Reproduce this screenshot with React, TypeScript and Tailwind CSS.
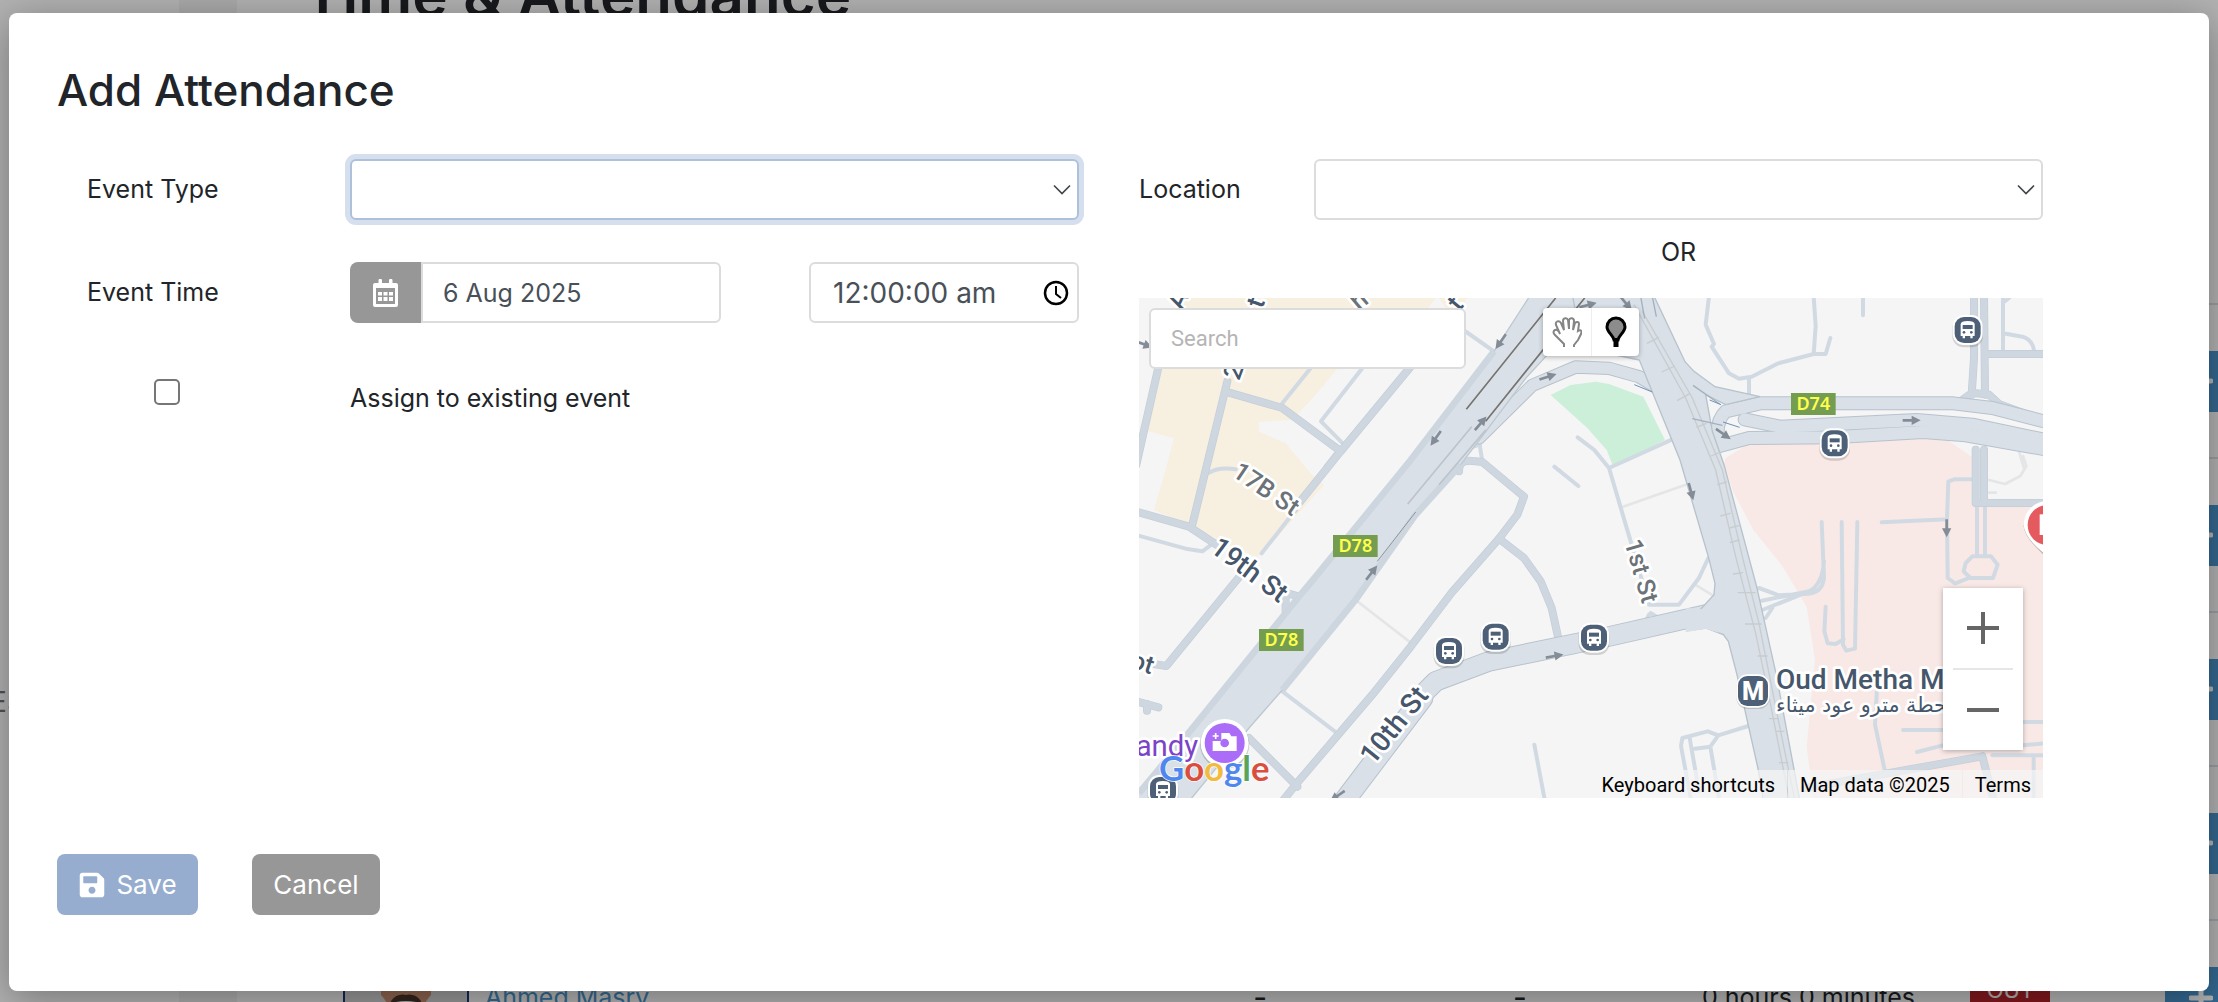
import React, { useState } from "react"
import { FaSave } from "react-icons/fa"

type Row = {
  name?: string
  start?: string
  end?: string
  total?: string
  status?: string
}

const rows: Row[] = [
  {},
  {},
  {},
  {},
  { name: "Ahmed Masry", start: "-", end: "-", total: "0 hours 0 minutes", status: "OUT" },
]

const field =
  "h-[61px] w-full rounded-md border-2 border-[#dcdcdc] bg-white text-[#495057] outline-none"

export default function App() {
  return (
    <div className="relative h-screen overflow-hidden bg-white font-['Inter',sans-serif] text-[#212529]">
      <AttendancePage />
      <div className="absolute inset-0 flex flex-col bg-black/30 px-[9px] pt-[13px] pb-[11px]">
        <AddAttendance />
      </div>
    </div>
  )
}

function AttendancePage() {
  return (
    <div className="flex h-full" aria-hidden="true">
      <aside className="flex w-[179px] shrink-0 items-end bg-white pb-[284px]">
        <span className="-ml-7 text-[28px] leading-[32px] text-[#777]">TES</span>
      </aside>
      <div className="w-[58px] shrink-0 bg-[#f4f4f4]" />
      <main className="min-w-0 grow pl-[90px]">
        <h1 className="-mt-[46px] -ml-6 h-[349px] text-[60px] leading-[80px] font-semibold">Time &amp; Attendance</h1>
        <table className="w-[calc(100%+33px)] table-fixed border-collapse text-[25px]">
          <colgroup>
            <col className="w-[8%]" />
            <col className="w-[34%]" />
            <col className="w-[13%]" />
            <col className="w-[14%]" />
            <col className="w-[16%]" />
            <col className="w-[5%]" />
            <col />
          </colgroup>
          <tbody>
            {rows.map((row, i) => (
              <tr key={i} className="h-[154px] border-t-2 border-[#dee2e6]">
                <td className="pl-4">{row.name && <Avatar />}</td>
                <td className="pl-1 text-[#4b96ce]">{row.name}</td>
                <td className="text-center text-[30px]">{row.start}</td>
                <td className="text-center text-[30px]">{row.end}</td>
                <td className="text-center whitespace-nowrap">{row.total}</td>
                <td>
                  {row.status && (
                    <span className="mx-auto block w-[80px] bg-[#bc252c] pb-4 text-center text-[22px] leading-[32px] text-white">
                      {row.status}
                    </span>
                  )}
                </td>
                <td className="pr-[15px]">
                  <button
                    type="button"
                    tabIndex={-1}
                    className="ml-auto flex h-[61px] w-[71px] items-center justify-center bg-[#4b96ce]"
                  >
                    <svg className="h-6 w-6" viewBox="0 0 24 24" stroke="#fff" strokeWidth="5" strokeLinecap="round">
                      <path d="M2 12h20M12 2v20" />
                    </svg>
                  </button>
                </td>
              </tr>
            ))}
          </tbody>
        </table>
      </main>
    </div>
  )
}

function Avatar() {
  return (
    <svg className="h-[126px] w-[126px]" viewBox="0 0 126 126">
      <rect x="1" y="1" width="124" height="124" fill="#d8d8d8" stroke="#1b3a78" strokeWidth="2" />
      <path d="M38 40Q38 14 63 14T88 40L88 60Q82 66 80 74Q74 88 63 88T46 74Q44 66 38 60Z" fill="#c98f70" />
      <path d="M38 40Q36 10 63 10T88 40Q78 26 63 26T38 40Z" fill="#2b201b" />
      <path d="M48 66Q54 58 63 60Q72 58 78 66Q76 90 63 90T48 66Z" fill="#4a342b" />
      <path d="M53 67Q63 65 73 67Q70 74 63 74T53 67Z" fill="#fff" />
    </svg>
  )
}

function AddAttendance() {
  const [eventType, setEventType] = useState("")
  const [location, setLocation] = useState("")
  const [assign, setAssign] = useState(false)

  return (
    <form
      role="dialog"
      aria-labelledby="dialog-title"
      className="flex grow flex-col rounded-lg bg-white px-12 pt-12 shadow-[0_8px_40px_rgba(0,0,0,0.35)]"
      onSubmit={(e) => e.preventDefault()}
    >
      <h2 id="dialog-title" className="text-[44px] leading-[58px] font-medium">
        Add Attendance
      </h2>

      <div className="mt-10 grid grid-cols-[293fr_729fr_60fr_904fr_118fr] text-[25px]">
        <div className="col-span-2">
          <div className="grid grid-cols-[293fr_729fr] items-center">
            <label htmlFor="event-type" className="pl-[30px]">
              Event Type
            </label>
            <Dropdown id="event-type" value={eventType} onChange={setEventType} focused />
          </div>

          <div className="mt-[42px] grid grid-cols-[293fr_371fr_88fr_270fr] items-center">
            <label htmlFor="event-date" className="pl-[30px]">
              Event Time
            </label>
            <div className="flex">
              <button
                type="button"
                aria-label="Open calendar"
                className="flex h-[61px] w-[71px] shrink-0 items-center justify-center rounded-l-lg bg-[#979797]"
              >
                <CalendarIcon />
              </button>
              <input
                id="event-date"
                type="text"
                defaultValue="6 Aug 2025"
                className={`${field} min-w-0 rounded-l-none pl-5 text-[25px]`}
              />
            </div>
            <div />
            <div className="relative">
              <input
                type="text"
                aria-label="Time"
                defaultValue="12:00:00 am"
                className={`${field} pr-12 pl-[22px] text-[28px]`}
              />
              <svg
                className="pointer-events-none absolute top-[18px] right-[10px] h-[26px] w-[26px]"
                viewBox="0 0 26 26"
                fill="none"
                stroke="#000"
              >
                <circle cx="13" cy="13" r="11" strokeWidth="2.500" />
                <path d="M13 6v8l5 4" strokeWidth="2" />
              </svg>
            </div>
          </div>

          <div className="mt-[52px] grid grid-cols-[293fr_729fr] items-start">
            <div className="flex justify-center pr-[74px]">
              <input
                id="assign"
                type="checkbox"
                checked={assign}
                onChange={(e) => setAssign(e.target.checked)}
                className="mt-1 h-[26px] w-[26px] appearance-none rounded-[5px] border-2 border-[#767676] bg-white checked:bg-[#96add0]"
              />
            </div>
            <label htmlFor="assign" className="pt-[5px]">
              Assign to existing event
            </label>
          </div>
        </div>

        <div className="col-start-4">
          <div className="grid grid-cols-[175fr_729fr] items-center">
            <label htmlFor="location">Location</label>
            <Dropdown id="location" value={location} onChange={setLocation} />
            <div />
            <p className="mt-3 text-center leading-[40px]">OR</p>
          </div>
          <MapPicker />
        </div>
      </div>

      <div className="mt-14 flex gap-[54px] pb-[76px] text-[26px] text-white">
        <button
          type="submit"
          className="flex h-[61px] w-[141px] items-center justify-center gap-[10px] rounded-lg bg-[#96add0]"
        >
          <FaSave className="h-7 w-7" />
          Save
        </button>
        <button type="button" className="h-[61px] w-[128px] rounded-lg bg-[#979797]">
          Cancel
        </button>
      </div>
    </form>
  )
}

function Dropdown({
  id,
  value,
  onChange,
  focused,
}: {
  id: string
  value: string
  onChange: (value: string) => void
  focused?: boolean
}) {
  return (
    <div className="relative">
      <select
        id={id}
        value={value}
        onChange={(e) => onChange(e.target.value)}
        className={
          focused
            ? "block h-[61px] w-full appearance-none rounded-md border-2 border-[#aec1dc] bg-white px-5 ring-5 ring-[#d6dfed] outline-none"
            : "block h-[61px] w-full appearance-none rounded-md border-2 border-[#dcdcdc] bg-white px-5 outline-none"
        }
      >
        <option value=""></option>
      </select>
      <svg
        className="pointer-events-none absolute top-[25px] right-2 h-3 w-[18px]"
        viewBox="0 0 18 12"
        fill="none"
        stroke="#3f444a"
        strokeWidth="1.600"
      >
        <path d="M1 1.500l8 8 8-8" />
      </svg>
    </div>
  )
}

function CalendarIcon() {
  return (
    <svg className="h-7 w-[25px]" viewBox="0 0 25 28" fill="#fff">
      <path
        fillRule="evenodd"
        d="M2 4h3.500V1.500a1.500 1.500 0 0 1 3.500 0V4h7V1.500a1.500 1.500 0 0 1 3.500 0V4H23a2 2 0 0 1 2 2v20a2 2 0 0 1-2 2H2a2 2 0 0 1-2-2V6a2 2 0 0 1 2-2ZM3 9v16h19V9Z"
      />
      <path d="M5 13h4v3.500H5zM10.500 13h4v3.500h-4zM16 13h4v3.500h-4zM5 18h4v4H5zM10.500 18h4v4h-4zM16 18h4v4h-4z" />
    </svg>
  )
}

function MapPicker() {
  return (
    <div className="relative mt-[26px] h-[500px] overflow-hidden font-['Roboto',sans-serif]">
      <StreetMap />

      <input
        type="text"
        aria-label="Search"
        placeholder="Search"
        className="absolute top-[10px] left-[10px] h-[61px] w-[317px] rounded-md border-2 border-[#dcdcdc] bg-white pl-5 text-[22px] outline-none placeholder:text-[#b5b5b5]"
      />

      <div className="absolute top-[10px] left-1/2 flex -translate-x-1/2 overflow-hidden rounded-sm bg-white shadow-[0_1px_5px_rgba(0,0,0,0.3)]">
        <button type="button" aria-label="Stop drawing" className="flex h-12 w-12 items-center justify-center">
          <svg className="h-[30px] w-[30px]" viewBox="0 0 30 30" fill="none" stroke="#858585" strokeWidth="2">
            <path d="M12 30v-3L3 18c-2-2-2-4 0-5s4 1 5 4L4 8c-1-4 3-5 5-2l3 7-1-9c0-3 4-4 5-1l1 9V3c1-3 5-2 5 1l-1 9 2-7c2-2 4-1 4 1l-1 7c3-2 4 0 3 3l-3 6-4 5v3" />
          </svg>
        </button>
        <button
          type="button"
          aria-label="Add a marker"
          className="flex h-12 w-12 items-center justify-center border-l border-[#eee]"
        >
          <svg className="h-8 w-6" viewBox="0 0 24 32" fill="#8c8c8c" stroke="#000" strokeWidth="3">
            <path d="M12 2a9 9 0 0 1 9 9c0 5-6 8-7 13h-4C9 19 3 16 3 11a9 9 0 0 1 9-9Z" />
            <path d="M12 22v9" strokeWidth="5" />
          </svg>
        </button>
      </div>

      <div className="absolute right-5 bottom-12 flex w-20 flex-col items-center bg-white shadow-[0_1px_5px_rgba(0,0,0,0.3)]">
        <button type="button" aria-label="Zoom in" className="flex h-20 w-20 items-center justify-center">
          <svg className="h-8 w-8" viewBox="0 0 32 32" fill="#666">
            <path d="M14 0h4v14h14v4H18v14h-4V18H0v-4h14z" />
          </svg>
        </button>
        <div className="h-[2px] w-[60px] bg-[#e6e6e6]" />
        <button type="button" aria-label="Zoom out" className="flex h-20 w-20 items-center justify-center">
          <svg className="h-8 w-8" viewBox="0 0 32 32" fill="#666">
            <path d="M0 14h32v4H0z" />
          </svg>
        </button>
      </div>

      <div className="absolute right-0 bottom-0 flex h-7 gap-px text-[20px] leading-[30px] text-black">
        <button type="button" className="bg-[#f5f5f5]/70 px-3">
          Keyboard shortcuts
        </button>
        <span className="bg-[#f5f5f5]/70 px-3">Map data ©2025</span>
        <a href="#terms" className="bg-[#f5f5f5]/70 px-3">
          Terms
        </a>
      </div>
    </div>
  )
}

const mediumRoads = [
  // west blocks
  "M60 200L-8 500M265 250L160 680M270 284L430 330L605 460L820 200M605 460L460 640",
  "M-10 640L150 686L232 740M306 830L82 1104L30 1096",
  "M0 1212l58 16M24 1218v20M412 876l76 22M440 900v60",
  // blocks east of the highway
  "M960 520Q960 480 1010 490L1030 492L1155 596L1135 650L1080 722L938 884L815 1046L700 1190L470 1460L430 1510",
  "M1080 722L1155 780L1205 850L1238 930L1260 1030",
  "M330 1320L475 1466",
  // north east
  "M2505 -10L2505 180L2498 290M2535 -10L2538 290M2545 168H2720M2450 320L2500 284L2550 290L2580 318L2720 370",
  "M2510 455v155M2535 455v155M2510 615H2720",
  "M2000 1470L2530 1375M2530 1375L2565 1510",
]

const smallRoads = [
  "M520 204L430 316M675 204L546 370L615 440M595 460L560 505M590 482L368 766M210 524Q240 506 290 514",
  "M-5 712L140 752L190 760L230 730",
  "M965 90l100 70",
  "M430 1180L595 1306M1246 506l72 58M1186 1340l32 170",
  "M1316 418l50 38L1410 510L1475 730L1530 920L1620 920L1680 840L1708 780M1410 510L1600 424M1530 950l-15 30M1535 945l40 26",
  "M960 460L1022 440L1030 490",
  "M1710 -5L1700 80L1725 138L1718 146L1770 226L1800 242L1838 236L1918 196L2024 168H2060L2074 120M2024 168L2030 84L2024 -5M1830 240V300M2172 -5V52",
  "M2592 160V-5M2592 14L2610 0M2592 106L2650 116Q2680 124 2686 160",
  "M2048 672L2055 840Q2050 890 1990 888L1920 892L1860 870M2055 790Q2050 860 2010 880L1870 936M1868 908L2010 880M1880 960L1900 930",
  "M2108 672L2112 1040L2122 1058L2148 1052L2155 672M2060 926L2056 1000L2066 1036L2090 1038L2114 1024",
  "M2228 673L2424 664L2428 550L2446 544H2500M2424 664L2426 840L2448 856L2490 840",
  "M2514 615v160M2538 615v160M2500 775H2556L2576 800L2562 840H2494L2474 820L2480 795Z",
  "M2214 1170L2208 1280L2240 1430M2292 1296H2420M2334 1362L2420 1340M2650 1272H2720M2650 1342L2720 1336M2560 1372H2720M2684 1372V1500",
  "M1828 1284L1738 1312L1706 1300L1630 1320L1626 1344L1655 1500M1652 1320L1680 1480M1738 1312L1714 1346L1668 1352M1714 1346L1740 1500",
]

const buses = [
  [2486, 96],
  [2087, 436],
  [930, 1059],
  [1070, 1016],
  [1365, 1019],
  [72, 1476],
]

const arrows = [
  [1085, 131, 125],
  [1025, 376, -50],
  [890, 421, 125],
  [1227, 236, -18],
  [2318, 367, 0],
  [1753, 408, 35],
  [1656, 581, 75],
  [2423, 691, 90],
  [698, 824, -52],
  [1247, 1074, -10],
  [595, 1494, 145],
  [15, 139, 20],
  [1347, 21, -15],
  [1461, 16, 50],
]

const shields = [
  { x: 1956, y: 285, text: "D74" },
  { x: 582, y: 711, text: "D78" },
  { x: 360, y: 993, text: "D78" },
]

const streets = [
  { x: 276, y: 532, r: 34, size: 75, color: "#6b7278", text: "17B St" },
  { x: 210, y: 758, r: 37, size: 82, color: "#46566b", text: "19th St" },
  { x: 702, y: 1404, r: -51, size: 84, color: "#46566b", text: "10th St" },
  { x: 1456, y: 732, r: 74, size: 75, color: "#6b7278", text: "1st St" },
  { x: 300, y: 250, r: -70, size: 76, color: "#46566b", text: "2" },
  { x: 130, y: 40, r: -65, size: 80, color: "#46566b", text: "A" },
  { x: 370, y: 34, r: -70, size: 76, color: "#46566b", text: "t" },
  { x: 660, y: 40, r: -40, size: 76, color: "#6b7278", text: "h" },
  { x: 960, y: 42, r: -50, size: 76, color: "#46566b", text: "t" },
  { x: -30, y: 1108, r: 18, size: 76, color: "#46566b", text: "ot" },
]

// Map units are a third of a pixel, so the line work stays on whole numbers.
function StreetMap() {
  return (
    <svg
      className="block h-full w-full"
      viewBox="0 0 2712 1500"
      preserveAspectRatio="xMidYMid slice"
      role="img"
      aria-label="Map around Oud Metha"
    >
      <rect width="2712" height="1500" fill="#f5f5f5" />

      {/* areas */}
      <path
        d="M135 0H890L830 80L595 212L530 290L460 366L360 371V401L440 436L515 526L555 561L370 766L350 776L240 726L160 686L45 636L80 516L105 421L15 396L60 212Z"
        fill="#f7efdf"
      />
      <path d="M900 0H985L960 40L920 30Z" fill="#f7efdf" />
      <path
        d="M1755 500L1760 480L1823 441L2418 421L2498 476V616H2712V1500H2023L2003 1346L2028 1086L2003 926L1928 801L1843 696L1783 581Z"
        fill="#f9e9e6"
      />
      <path d="M1235 291L1295 261L1370 251L1410 258L1513 296L1578 426L1423 506L1403 456L1345 390Z" fill="#cbefd8" />

      {/* local roads */}
      <g fill="none" strokeLinejoin="round" strokeLinecap="round">
        <g stroke="#e4e5e7" strokeWidth="8">
          <path d="M650 906L815 1034M1452 626L1640 560M1672 862l50 30M2550 546l48 12l46-24l18-30l-10-30M2550 584h20M2640 460l14 48" />
        </g>
        <g stroke="#d1dae2" strokeWidth="12">
          {smallRoads.map((d) => (
            <path key={d} d={d} />
          ))}
        </g>
        <g stroke="#c3ced8" strokeWidth="24">
          {mediumRoads.map((d) => (
            <path key={d} d={d} />
          ))}
        </g>
        <g stroke="#ced7e0" strokeWidth="20">
          {mediumRoads.map((d) => (
            <path key={d} d={d} />
          ))}
        </g>
      </g>

      {/* ramps and D74 */}
      <g fill="none" strokeLinejoin="round" strokeLinecap="round">
        <g stroke="#b7c2cc" strokeWidth="40">
          <path d="M1020 420L1180 262L1310 207L1410 211L1500 236L1590 290" />
          <path d="M1740 440Q1726 372 1760 340L1863 316H2443L2560 330L2730 374" strokeWidth="42" />
          <path d="M1817 364L1923 386L2333 366L2500 380L2730 428" strokeWidth="42" />
          <path d="M1720 450L1830 420L2083 418L2353 402L2480 412L2730 456" strokeWidth="42" />
          <path d="M840 1200L890 1150L1050 1090L1390 1020L1720 945" strokeWidth="62" />
          <path d="M600 1530L850 1200" strokeWidth="66" />
        </g>
        <g stroke="#d9e0e7" strokeWidth="34">
          <path d="M1020 420L1180 262L1310 207L1410 211L1500 236L1590 290" />
          <path d="M1740 440Q1726 372 1760 340L1863 316H2443L2560 330L2730 374" strokeWidth="36" />
          <path d="M1817 364L1923 386L2333 366L2500 380L2730 428" strokeWidth="36" />
          <path d="M1720 450L1830 420L2083 418L2353 402L2480 412L2730 456" strokeWidth="36" />
          <path d="M840 1200L890 1150L1050 1090L1390 1020L1720 945" strokeWidth="56" />
          <path d="M600 1530L850 1200" strokeWidth="60" />
        </g>
      </g>

      {/* highways */}
      <path
        d="M1175 -10H1410L1220 176L1160 241L1040 401L965 500L830 650L650 905L430 1176L330 1290L150 1510H-10V1486L140 1316L480 896L530 836L815 486L1065 160Z"
        fill="#d9e0e7"
        stroke="#bcc7d1"
        strokeWidth="4"
      />
      <path
        d="M1065 160L815 486L530 836L480 896L140 1316L0 1486M965 500L830 650L650 905L430 1176"
        fill="none"
        stroke="#cdd6df"
        strokeWidth="20"
      />
      <path
        d="M1300 -10H1543L1638 191L1665 220L1728 266L1863 296L1760 320L1700 290L1720 400L1755 500L1853 866L1913 1136L1983 1510H1873L1858 1416L1793 1126L1768 1030L1753 1010L1700 990L1660 996V940L1683 936L1725 890L1728 856L1708 776L1623 486L1501 186L1330 150Z"
        fill="#d9e0e7"
        stroke="#b7c2cc"
        strokeWidth="4"
      />
      <path d="M1640 930L1690 934L1740 1004L1700 992L1640 1003Z" fill="#d9e0e7" />
      <path
        d="M1485 20L1640 300L1730 516L1790 776L1850 1006L1890 1196L1950 1500M1510 40L1660 300L1750 516L1810 776L1860 976L1920 1276L1966 1500"
        fill="none"
        stroke="#c8cccf"
        strokeWidth="4"
      />
      <path
        d="M1524 136l36-18M1568 222l40-18M1614 308l40-22M1672 388l30-12M1716 474l30-12M1734 560l30-8M1744 654l30-8M1772 690l30-8M1772 734l30-8M1782 828l30-4M1796 884h54M1818 978h50M1856 1074h30M1890 1262h30M1912 1300h24M1920 1394h28"
        stroke="#c8cccf"
        strokeWidth="4"
      />
      <path d="M1250 0L982 334M1337 0L1040 370" stroke="#76736f" strokeWidth="5" />
      <path d="M998 386L806 618M1040 396L900 560" stroke="#bcc3ca" strokeWidth="5" />
      <path d="M830 642L715 790" stroke="#909499" strokeWidth="3" />
      <path d="M1505 -4l12 66M1540 -4l12 60M1662 262l80 56M1660 362l90 20" stroke="#a3b0be" strokeWidth="4" fill="none" />
      <path d="M1486 260l54 22M1712 306l34 14M1752 372l50 16" stroke="#6f8fba" strokeWidth="3" />

      {arrows.map(([x, y, r]) => (
        <g key={`${x}-${y}`} transform={`translate(${x} ${y}) rotate(${r})`} fill="#848c97">
          <path d="M-27 -4H0V-14L27 0L0 14V4H-27Z" />
        </g>
      ))}

      {shields.map((s) => (
        <g key={`${s.x}-${s.y}`}>
          <rect x={s.x} y={s.y} width="134" height="66" fill="#759d4f" />
          <text
            x={s.x + 67}
            y={s.y + 52}
            textAnchor="middle"
            fill="#ffff4d"
            fontFamily="Noto Sans, sans-serif"
            fontSize="54"
            fontWeight="600"
          >
            {s.text}
          </text>
        </g>
      ))}

      <g stroke="#fff" strokeWidth="16" strokeLinejoin="round" paintOrder="stroke" fontWeight="500">
        {streets.map((s) => (
          <text
            key={`${s.x}-${s.y}`}
            transform={`translate(${s.x} ${s.y}) rotate(${s.r})`}
            fontSize={s.size}
            fill={s.color}
          >
            {s.text}
          </text>
        ))}
        <text x="1911" y="1174" fontSize="84" fill="#46566b">
          Oud Metha M
        </text>
        <text
          x="1911"
          y="1243"
          fontSize="62"
          fontWeight="400"
          fill="#46566b"
          fontFamily="DejaVu Sans, sans-serif"
        >
          محطة مترو عود ميثاء
        </text>
        <text x="-10" y="1374" fontSize="88" fontWeight="400" fill="#7c43c8">
          andy
        </text>
      </g>

      {buses.map(([x, y]) => (
        <BusStop key={`${x}-${y}`} x={x} y={y} />
      ))}

      <g transform="translate(1842 1179)">
        <rect x="-50" y="-46" width="100" height="100" rx="34" fill="#000" opacity="0.15" />
        <rect x="-50" y="-50" width="100" height="100" rx="34" fill="#fff" />
        <rect x="-45" y="-45" width="90" height="90" rx="28" fill="#4d6077" />
        <text y="27" textAnchor="middle" fontSize="76" fontWeight="800" fill="#fff">
          M
        </text>
      </g>

      {/* attraction */}
      <g transform="translate(257 1335)">
        <circle cy="4" r="74" fill="#000" opacity="0.18" />
        <path d="M-30 60L0 96L30 60Z" fill="#fff" />
        <circle r="72" fill="#fff" />
        <circle r="60" fill="#ab6df8" />
        <path d="M-36 -6H-10V-30H14L20 -20H36V24H-36Z" fill="#fff" />
        <path d="M-27 -30v18M-36 -21h18" stroke="#fff" strokeWidth="5" />
        <circle r="13" fill="#ab6df8" />
      </g>

      {/* hospital */}
      <g transform="translate(2726 681)">
        <path d="M-72 4A72 72 0 0 1 72 4Q60 60 0 100Q-70 40 -72 4Z" fill="#000" opacity="0.25" />
        <path d="M-72 0A72 72 0 0 1 72 0Q60 60 0 94Q-70 40 -72 0Z" fill="#fff" />
        <circle r="60" fill="#e55a5e" />
        <path d="M-24 -32h14v62h-14z" fill="#fff" />
      </g>

      <text
        x="60"
        y="1448"
        fontFamily="Lato, sans-serif"
        fontSize="104"
        fontWeight="700"
        stroke="#fff"
        strokeWidth="4"
        paintOrder="stroke"
      >
        <tspan fill="#4f87ee">G</tspan>
        <tspan fill="#d84f3f">o</tspan>
        <tspan fill="#f0bb3f">o</tspan>
        <tspan fill="#4f87ee">g</tspan>
        <tspan fill="#57a55c">l</tspan>
        <tspan fill="#d84f3f">e</tspan>
      </text>
    </svg>
  )
}

function BusStop({ x, y }: { x: number; y: number }) {
  return (
    <g transform={`translate(${x} ${y})`}>
      <rect x="-46" y="-40" width="92" height="92" rx="34" fill="#000" opacity="0.15" />
      <rect x="-45" y="-45" width="90" height="90" rx="34" fill="#fff" />
      <rect x="-39" y="-39" width="78" height="78" rx="28" fill="#4d6077" />
      <path d="M-21 -18Q-20 -27 0 -27T21 -18V18H15V25H8V18H-8V25H-15V18H-21Z" fill="#fff" />
      <rect x="-15" y="-15" width="30" height="12" fill="#4d6077" />
      <circle cx="-11" cy="7" r="4" fill="#4d6077" />
      <circle cx="11" cy="7" r="4" fill="#4d6077" />
    </g>
  )
}
